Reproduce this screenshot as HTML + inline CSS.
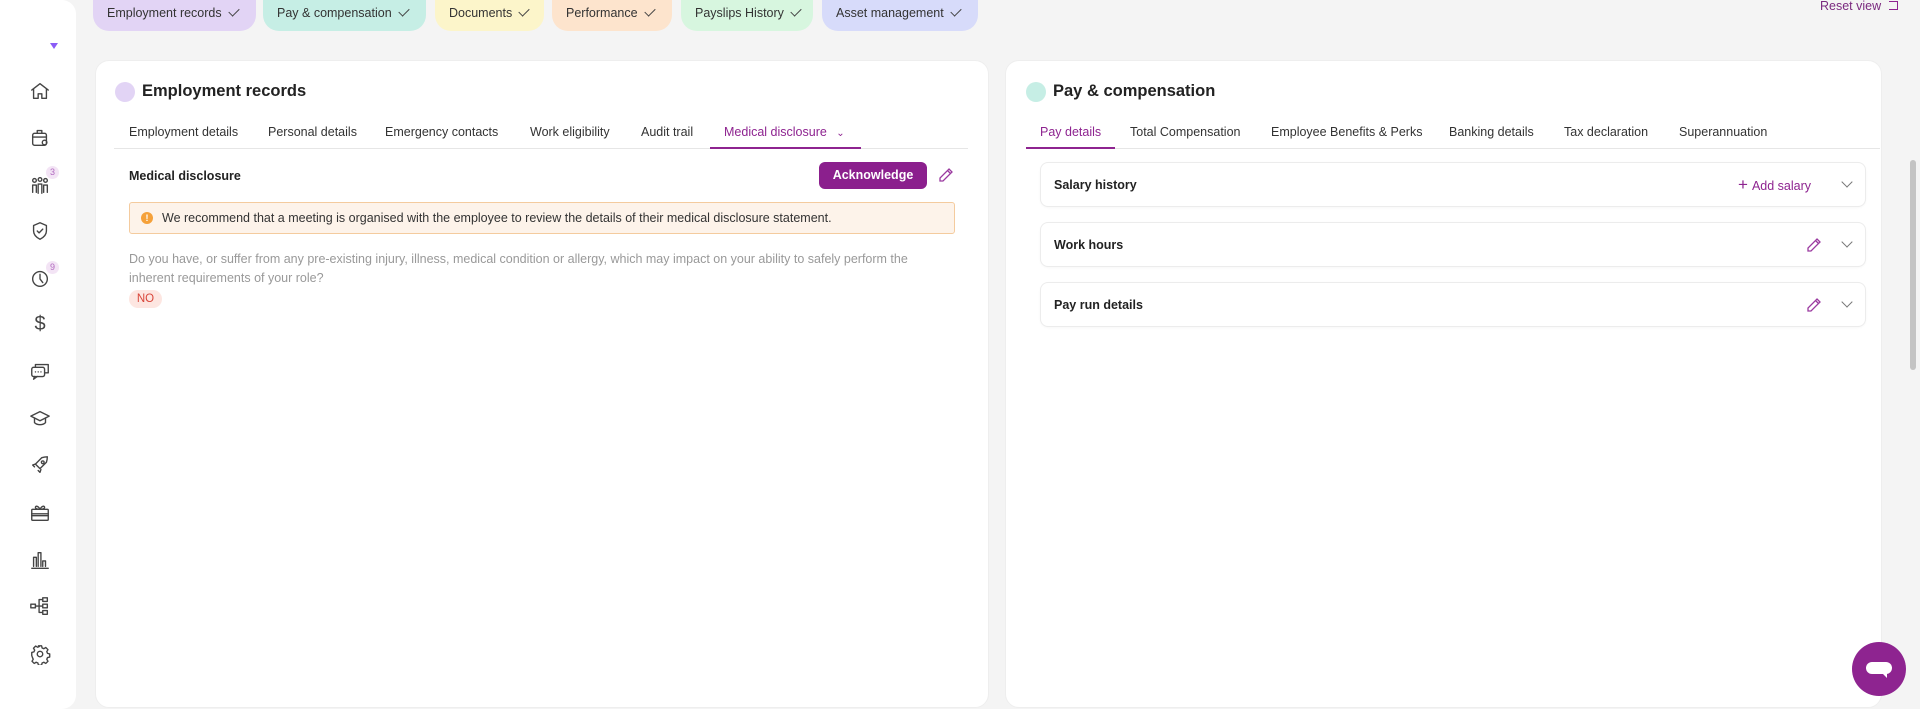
<!DOCTYPE html>
<html><head><meta charset="utf-8"><style>
*{box-sizing:border-box;margin:0;padding:0}
body{width:1920px;height:709px;overflow:hidden;background:#f4f4f4;font-family:"Liberation Sans",sans-serif;color:#222;position:relative}
.abs{position:absolute}
.side{left:0;top:0;width:76px;height:709px;background:#fff;border-radius:0 14px 14px 0}
.ic{position:absolute;left:29px;width:22px;height:22px}
.ic svg{width:22px;height:22px;fill:none;stroke:#444;stroke-width:1.5;stroke-linecap:round;stroke-linejoin:round}
.badge{position:absolute;left:46px;width:13px;height:13px;border-radius:50%;background:#f3e4f5;color:#b26bc0;font-size:9px;text-align:center;line-height:13px}
.chip{position:absolute;top:-2px;height:33px;border-radius:0 0 16px 16px;font-size:12.5px;line-height:31px;padding-left:14px;color:#333}
.chip:after{content:"";display:inline-block;width:9px;height:5px;border-left:1.3px solid #444;border-bottom:1.3px solid #444;transform:rotate(-45deg);margin-left:7px;position:relative;top:-3px}
.card{background:#fff;border-radius:14px;border:1px solid #eee;top:60px;height:648px}
.dot{width:20px;height:20px;border-radius:50%}
.title{font-size:16.5px;font-weight:700;color:#222}
.tab{position:absolute;font-size:12.5px;top:125px;color:#333}
.line{height:1px;background:#e6e6e6}
.ul{height:2px;background:#8e2490}
.acc{left:1040px;width:826px;height:45px;border:1px solid #ececec;border-radius:8px;background:#fff;box-shadow:0 1px 2px rgba(0,0,0,.03)}
.acc b{position:absolute;left:13px;top:15px;font-size:12.5px}
.chev{position:absolute;width:8px;height:8px;border-right:1.3px solid #777;border-bottom:1.3px solid #777;transform:rotate(45deg)}
</style></head><body>
<div class="abs side"></div>
<div class="abs" style="left:50px;top:43px;width:0;height:0;border-left:4px solid transparent;border-right:4px solid transparent;border-top:6px solid #8b5cf6"></div>
<div class="ic" style="top:80px"><svg viewBox="0 0 24 24"><path d="M3 11L12 4l9 7M5 9.5V20h5v-5h4v5h5V9.5"/></svg></div>
<div class="ic" style="top:126px"><svg viewBox="0 0 24 24"><rect x="4" y="8" width="15" height="13" rx="2"/><path d="M9 8V5h5v3M4 12h15"/><circle cx="17" cy="18" r="2.5"/></svg></div>
<div class="ic" style="top:174px"><svg viewBox="0 0 24 24"><circle cx="6" cy="7" r="2"/><circle cx="12" cy="6" r="2"/><circle cx="18" cy="7" r="2"/><path d="M4 20v-8h4v8M10 21v-10h4v10M16 20v-8h4v8"/></svg></div>
<div class="badge" style="top:166px">3</div>
<div class="ic" style="top:220px"><svg viewBox="0 0 24 24"><path d="M12 3l7 3v6c0 4-3 7-7 9-4-2-7-5-7-9V6z"/><path d="M9 12l2 2 4-4"/></svg></div>
<div class="ic" style="top:267px"><svg viewBox="0 0 24 24"><circle cx="12" cy="13" r="8"/><path d="M12 8v5l3 4"/></svg></div>
<div class="badge" style="top:261px">9</div>
<div class="ic" style="top:313px;font-size:20px;text-align:center;color:#444;line-height:22px">$</div>
<div class="ic" style="top:360px"><svg viewBox="0 0 24 24"><rect x="3" y="8" width="14" height="10" rx="2"/><path d="M7 8V5h14v9h-4M6 18l-1 3 4-3"/><path d="M7 13h.1M10 13h.1M13 13h.1"/></svg></div>
<div class="ic" style="top:407px"><svg viewBox="0 0 24 24"><path d="M2 10l10-5 10 5-10 5z"/><path d="M6 12v5c3 3 9 3 12 0v-5"/></svg></div>
<div class="ic" style="top:454px"><svg viewBox="0 0 24 24"><path d="M14 4c3-1 6-1 6-1s0 3-1 6l-7 7-5-5z"/><path d="M7 11l-3 1 2 2M13 17l-1 3-2-2"/><circle cx="15" cy="9" r="1.5"/></svg></div>
<div class="ic" style="top:501px"><svg viewBox="0 0 24 24"><rect x="3" y="9" width="18" height="12" rx="1"/><path d="M3 14h18M3 16h18M12 9c-2-4-5-4-5-2s3 2 5 2c2 0 5 0 5-2s-3-2-5 2"/></svg></div>
<div class="ic" style="top:549px"><svg viewBox="0 0 24 24"><path d="M3 21h18M5 19V9h3v10M10 19V4h3v15M15 19v-6h3v6"/></svg></div>
<div class="ic" style="top:595px"><svg viewBox="0 0 24 24"><rect x="2" y="10" width="5" height="4"/><rect x="15" y="3" width="5" height="4"/><rect x="15" y="10" width="5" height="4"/><rect x="15" y="17" width="5" height="4"/><path d="M7 12h8M11 5v14M11 5h4M11 19h4"/></svg></div>
<div class="ic" style="top:643px"><svg viewBox="0 0 24 24"><circle cx="12" cy="12" r="3"/><path d="M10.3 3h3.4l.6 2.4 1.9.8 2.1-1.3 2.4 2.4-1.3 2.1.8 1.9 2.4.6v3.4l-2.4.6-.8 1.9 1.3 2.1-2.4 2.4-2.1-1.3-1.9.8-.6 2.4h-3.4l-.6-2.4-1.9-.8-2.1 1.3-2.4-2.4 1.3-2.1-.8-1.9L3 13.7v-3.4l2.4-.6.8-1.9-1.3-2.1 2.4-2.4 2.1 1.3 1.9-.8z"/></svg></div>

<div class="chip" style="left:93px;width:163px;background:#e2d4f5">Employment records</div>
<div class="chip" style="left:263px;width:163px;background:#c6eee5">Pay &amp; compensation</div>
<div class="chip" style="left:435px;width:109px;background:#fcf5ca">Documents</div>
<div class="chip" style="left:552px;width:120px;background:#fde4cd">Performance</div>
<div class="chip" style="left:681px;width:132px;background:#d7f6df">Payslips History</div>
<div class="chip" style="left:822px;width:156px;background:#d7dbfa">Asset management</div>
<div class="abs" style="left:1820px;top:-1px;font-size:12.5px;color:#7a2a7f">Reset view <span style="display:inline-block;width:9px;height:9px;border:1.3px solid #8e2490;border-left:none;margin-left:4px"></span></div>

<div class="abs card" style="left:95px;width:894px"></div>
<div class="abs dot" style="left:115px;top:82px;background:#e2d4f5"></div>
<div class="abs title" style="left:142px;top:82px">Employment records</div>
<div class="tab" style="left:129px">Employment details</div>
<div class="tab" style="left:268px">Personal details</div>
<div class="tab" style="left:385px">Emergency contacts</div>
<div class="tab" style="left:530px">Work eligibility</div>
<div class="tab" style="left:641px">Audit trail</div>
<div class="tab" style="left:724px;color:#8e2490">Medical disclosure <span style="font-size:10px;margin-left:6px">&#8964;</span></div>
<div class="abs line" style="left:114px;top:148px;width:854px"></div>
<div class="abs ul" style="left:710px;top:147px;width:151px"></div>
<div class="abs" style="left:129px;top:169px;font-size:12.5px;font-weight:700">Medical disclosure</div>
<div class="abs" style="left:819px;top:162px;width:108px;height:27px;border-radius:6px;background:#8b1f8d;color:#fff;font-size:12.5px;font-weight:700;text-align:center;line-height:27px">Acknowledge</div>
<svg class="abs" style="left:938px;top:167px" width="16" height="16" viewBox="0 0 16 16" fill="none" stroke="#9b3aa0" stroke-width="1.3"><path d="M11 2l3 3-9 9H2v-3z M9.5 3.5l3 3"/></svg>
<div class="abs" style="left:129px;top:202px;width:826px;height:32px;background:#fdf3ea;border:1px solid #f4cb9e;border-radius:3px"></div>
<div class="abs" style="left:141px;top:212px;width:12px;height:12px;border-radius:50%;background:#f5a13a;color:#fff;font-size:9px;font-weight:700;text-align:center;line-height:12px">!</div>
<div class="abs" style="left:162px;top:211px;font-size:12.5px;color:#333">We recommend that a meeting is organised with the employee to review the details of their medical disclosure statement.</div>
<div class="abs" style="left:129px;top:250px;width:820px;font-size:12.5px;color:#999;line-height:19px">Do you have, or suffer from any pre-existing injury, illness, medical condition or allergy, which may impact on your ability to safely perform the inherent requirements of your role?</div>
<div class="abs" style="left:129px;top:290px;width:33px;height:18px;border-radius:9px;background:#fde6e1;color:#d9463a;font-size:11.5px;text-align:center;line-height:18px">NO</div>

<div class="abs card" style="left:1005px;width:877px"></div>
<div class="abs dot" style="left:1026px;top:82px;background:#c6eee5"></div>
<div class="abs title" style="left:1053px;top:82px">Pay &amp; compensation</div>
<div class="tab" style="left:1040px;color:#8e2490">Pay details</div>
<div class="tab" style="left:1130px">Total Compensation</div>
<div class="tab" style="left:1271px">Employee Benefits &amp; Perks</div>
<div class="tab" style="left:1449px">Banking details</div>
<div class="tab" style="left:1564px">Tax declaration</div>
<div class="tab" style="left:1679px">Superannuation</div>
<div class="abs line" style="left:1026px;top:148px;width:854px"></div>
<div class="abs ul" style="left:1026px;top:147px;width:89px"></div>

<div class="abs acc" style="top:162px"><b>Salary history</b>
<span style="position:absolute;left:697px;top:12px;color:#8e2490;font-size:12.5px"><span style="font-size:17px;font-weight:300;margin-right:4px">+</span>Add salary</span>
<div class="chev" style="left:802px;top:15px"></div></div>
<div class="abs acc" style="top:222px"><b>Work hours</b>
<svg style="position:absolute;left:765px;top:14px" width="16" height="16" viewBox="0 0 16 16" fill="none" stroke="#9b3aa0" stroke-width="1.3"><path d="M11 2l3 3-9 9H2v-3z M9.5 3.5l3 3"/></svg>
<div class="chev" style="left:802px;top:15px"></div></div>
<div class="abs acc" style="top:282px"><b>Pay run details</b>
<svg style="position:absolute;left:765px;top:14px" width="16" height="16" viewBox="0 0 16 16" fill="none" stroke="#9b3aa0" stroke-width="1.3"><path d="M11 2l3 3-9 9H2v-3z M9.5 3.5l3 3"/></svg>
<div class="chev" style="left:802px;top:15px"></div></div>

<div class="abs" style="left:1910px;top:160px;width:6px;height:210px;border-radius:3px;background:#c4c4c4"></div>
<div class="abs" style="left:1852px;top:642px;width:54px;height:54px;border-radius:50%;background:#8e2490"></div>
<div class="abs" style="left:1866px;top:662px;width:26px;height:12px;border-radius:6px;background:#fff"></div>
<div class="abs" style="left:1882px;top:673px;width:0;height:0;border-left:5px solid transparent;border-top:5px solid #fff"></div>
</body></html>
